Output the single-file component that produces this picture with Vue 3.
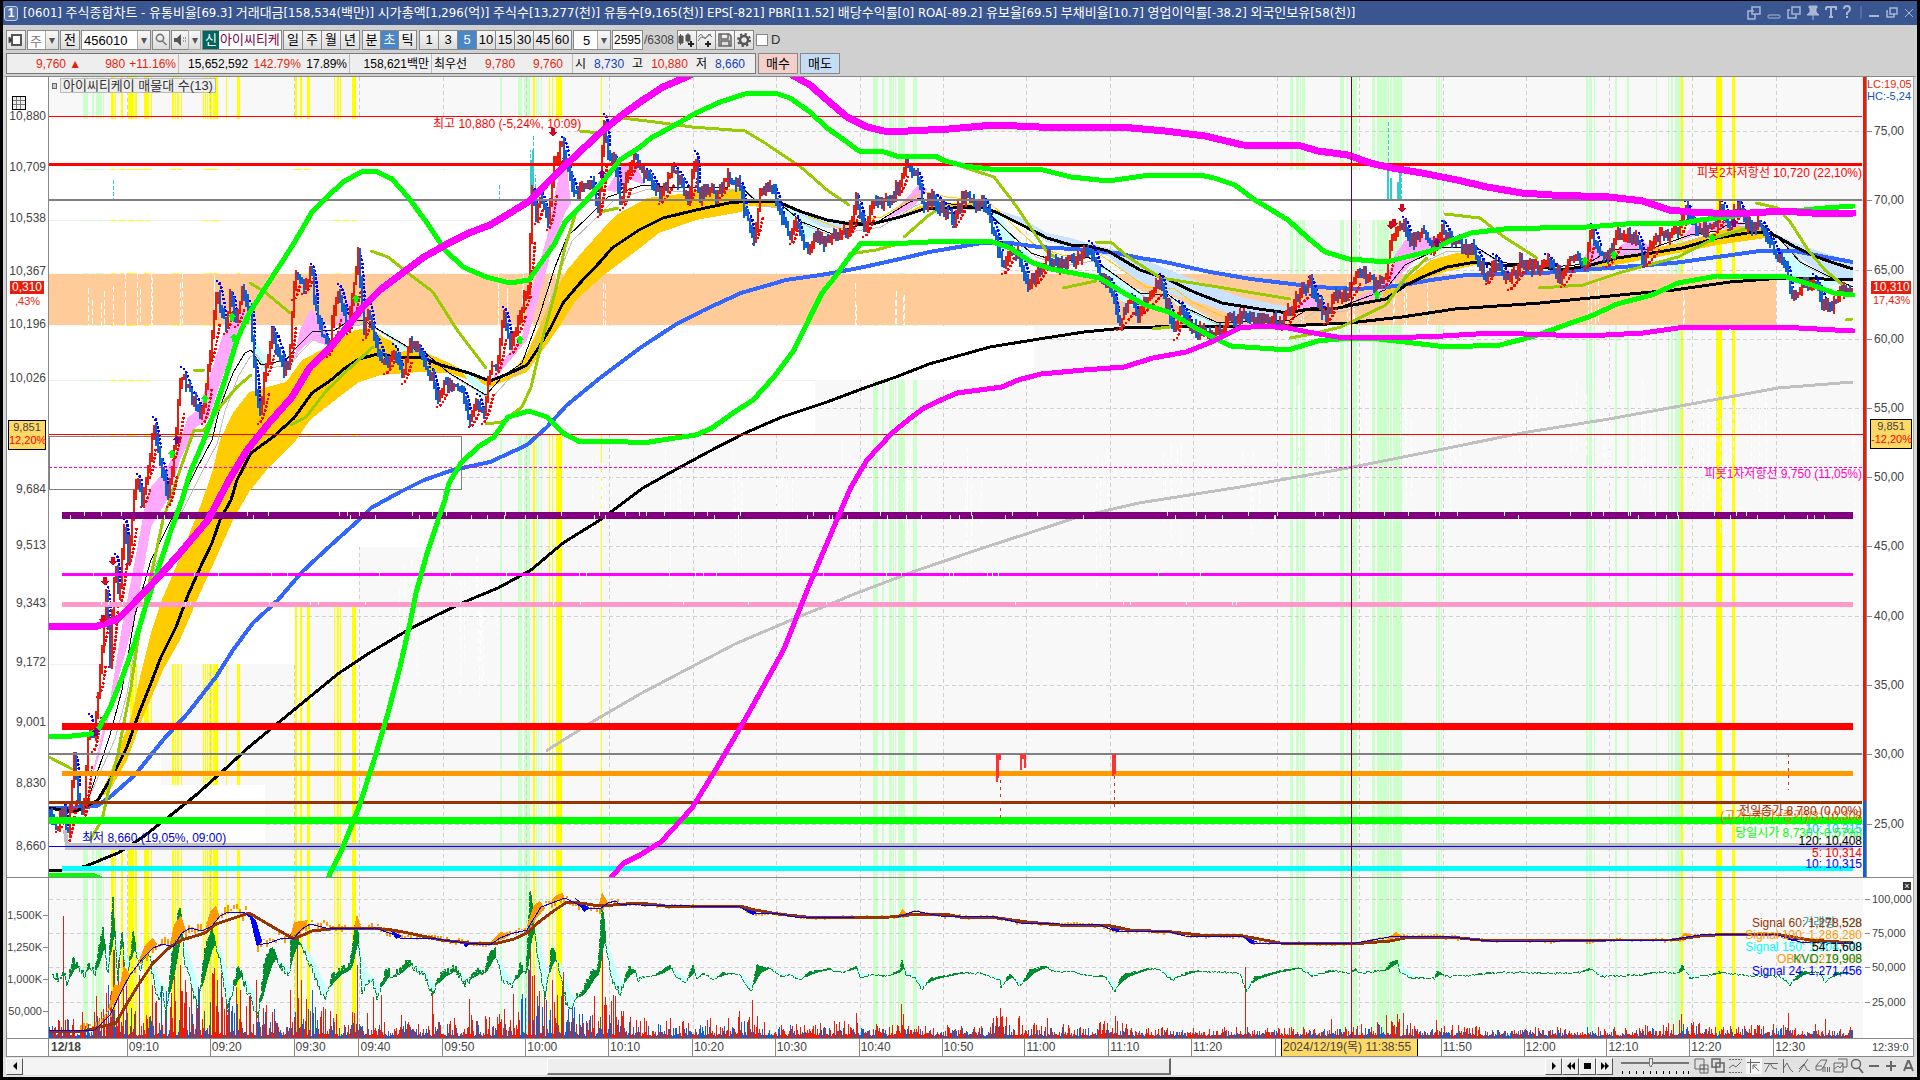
<script setup>
const rnd = (seed) => {
  let s = seed
  return () => {
    s = (s * 1103515245 + 12345) % 2147483648
    return s / 2147483648
  }
}
const pts = (str) => str.trim().split(/\s+/).map((p) => p.split(',').map(Number))
const at = (list, x) => {
  if (x <= list[0][0]) return list[0][1]
  for (let i = 1; i < list.length; i++) {
    if (x <= list[i][0]) {
      const [x0, y0] = list[i - 1]
      const [x1, y1] = list[i]
      return x1 === x0 ? y1 : y0 + ((y1 - y0) * (x - x0)) / (x1 - x0)
    }
  }
  return list[list.length - 1][1]
}

/* Signal bands: [x, width] */
const yellow = [[111, 3], [115, 1], [121, 2], [128, 6], [135, 2], [144, 5], [151, 1], [172, 2], [175, 1], [177, 2], [181, 1], [203, 1], [205, 1], [207, 1], [209, 3], [213, 5], [226, 1], [237, 3], [295, 2], [300, 2], [307, 3], [334, 1], [337, 2], [340, 1], [352, 4], [533, 2], [549, 1], [552, 1], [556, 6], [601, 1], [1681, 2], [1716, 6], [1732, 3]]
const green = [[83, 5], [92, 2], [96, 6], [103, 1], [500, 2], [518, 4], [524, 6], [536, 1], [538, 1], [541, 1], [873, 5], [882, 2], [889, 3], [893, 1], [895, 1], [898, 7], [913, 4], [1290, 3], [1296, 3], [1300, 1], [1302, 3], [1340, 4], [1347, 1], [1352, 5], [1372, 3], [1377, 12], [1390, 2], [1393, 8], [1401, 1], [1436, 1], [1438, 2], [1441, 1], [1586, 2], [1589, 3], [1594, 1], [1615, 2], [1627, 2], [1656, 1], [1668, 1], [1671, 2], [1675, 6]]
const gridX = [127, 210, 294, 359, 443, 526, 609, 693, 776, 860, 943, 1026, 1110, 1193, 1277, 1359, 1443, 1526, 1609, 1692, 1776]
const gridY = [131, 200, 270, 339, 408, 477, 546, 616, 685, 754, 824]
const gridY2 = [899, 933, 967, 1002]

/* Volume-by-price boxes: [top, bottom, right edge] */
const boxes = [[170, 220, 1421], [220, 273, 1000], [326, 380, 1034], [380, 435, 815], [489, 547, 443], [547, 605, 359], [605, 664, 295], [664, 724, 130], [724, 785, 161], [785, 847, 265], [119, 169, 563]]

const fills = [
  ['#ffcc00', '98,800 110,773 131,717 141,673 151,633 163,597 176,567 192,527 200,507 212,473 220,440 233,413 249,392 286,382 302,360 327,347 355,330 371,328 384,338 408,347 420,350 449,363 490,383 510,375 527,353 539,327 551,300 567,270 584,250 602,230 616,215 640,202 647,198 696,192 741,188 749,205 741,212 696,220 659,233 640,248 604,275 576,300 559,327 543,350 527,372 490,387 449,373 420,372 380,375 359,382 339,397 310,420 294,443 269,467 249,492 233,520 212,567 200,593 180,640 163,670 143,717 127,760 110,790'],
  ['#ffcc00', '749,200 778,201 778,208 749,206'],
  ['#ffcc00', '892,220 920,206 940,203 985,203 985,209 920,210'],
  ['#ffcc00', '1383,292 1409,277 1431,260 1457,253 1476,252 1480,264 1444,272 1413,283 1383,297'],
  ['#ffcc00', '1590,264 1630,252 1680,243 1717,232 1735,226 1766,226 1765,238 1717,245 1652,258 1590,270'],
  ['#c8e2ff', '778,201 802,211 827,218 851,222 876,221 851,229 827,228 802,220'],
  ['#c8e2ff', '998,210 1022,218 1047,233 1071,238 1088,243 1116,250 1150,262 1194,280 1240,297 1288,307 1288,320 1240,318 1210,306 1165,292 1130,277 1108,256 1047,242'],
  ['#c8e2ff', '1778,235 1800,245 1853,262 1853,283 1825,276 1795,254'],
  ['#ffaaff', '90,783 110,700 122,627 135,560 145,507 151,487 163,473 176,453 188,417 198,410 212,370 222,337 233,323 245,307 249,320 241,333 224,373 208,420 196,427 180,460 167,500 151,527 135,617 118,680 98,760'],
  ['#ffaaff', '294,360 300,330 310,310 320,315 331,345 325,345 312,340 300,350'],
  ['#ffaaff', '335,325 345,305 357,295 360,315 347,325'],
  ['#ffaaff', '490,383 502,362 522,337 531,293 547,237 555,193 565,150 571,203 565,213 551,253 539,297 527,340 502,370'],
  ['#ffaaff', '606,190 622,165 634,160 645,185 630,180 615,192'],
  ['#ffaaff', '885,219 905,200 920,183 927,190 915,205 895,216'],
  ['#ffaaff', '1290,313 1305,298 1318,298 1330,308'],
  ['#ffaaff', '1350,303 1385,283 1395,255 1405,240 1440,236 1455,235 1440,248 1420,255 1400,275 1380,297'],
  ['#ffaaff', '1580,264 1595,240 1602,250 1610,255 1630,238 1645,243 1655,250 1680,240 1695,223 1720,222 1755,222 1720,230 1690,237 1650,252 1600,262'],
  ['#ccffff', '461,370 486,405 490,390 470,373'],
  ['#ccffff', '251,330 262,372 270,362 258,345'],
  ['#ccffff', '378,320 400,352 412,350 392,335'],
  ['#ccffff', '780,203 800,235 820,240 832,235 810,220'],
  ['#ccffff', '985,208 995,225 1005,250 1020,262 1035,262 1015,240 1000,215'],
  ['#ccffff', '1095,262 1120,300 1142,312 1150,295 1125,283 1105,265'],
  ['#ccffff', '1165,292 1195,325 1220,328 1210,318 1185,303'],
  ['#ccffff', '1780,245 1795,285 1820,288 1840,284 1810,270']
]

const fastMa = pts('49,808 75,812 88,800 110,735 122,690 135,615 151,560 196,470 212,440 220,407 233,373 245,353 251,350 261,365 286,360 294,350 312,332 335,330 347,322 363,320 384,333 408,347 424,352 449,373 486,395 502,377 522,363 539,317 555,267 567,237 588,217 608,197 643,185 680,188 729,187 741,187 757,202 778,202 802,222 835,235 851,227 876,223 908,203 920,198 941,203 982,207 1006,230 1031,253 1059,262 1088,257 1108,270 1140,293 1169,295 1186,308 1218,323 1239,322 1290,320 1310,308 1340,307 1385,290 1405,265 1440,248 1476,247 1500,262 1540,268 1587,264 1610,250 1650,249 1690,235 1717,231 1730,223 1760,223 1778,237 1800,262 1830,277 1853,287')
const join = (l) => l.map((p) => p.join(',')).join(' ')
const slowMa = fastMa.map(([x, y], i) => [i > 2 && x < 1848 ? x + 5 : x, i > 2 ? y + 4 : y])
const goldMa = fastMa.filter((p) => p[0] > 778 && p[0] < 1290).map(([x, y]) => [x + 6, y - 6])

const curves = [
  ['#c0c0c0', 1, join(slowMa)],
  ['#ffcc00', 1, join(goldMa)],
  ['#000000', 1, join(fastMa)],
  ['#c0c0c0', 3, '546,751 592,722 640,694 735,644 796,618 857,593 918,570 980,549 1078,517 1139,503 1240,487 1348,468 1448,448 1522,433 1609,419 1691,404 1778,388 1853,382'],
  ['#000000', 3, '49,871 75,869 86,866 118,853 143,837 171,815 196,795 224,770 249,747 278,723 306,700 339,673 371,652 408,630 437,615 469,600 498,588 531,570 563,543 600,520 627,500 643,488 675,470 708,452 745,433 782,417 827,402 867,387 896,377 929,364 990,347 1039,339 1084,332 1124,328 1186,326 1284,326 1349,323 1402,317 1455,309 1540,303 1630,294 1674,290 1730,282 1769,279 1795,278 1853,280'],
  ['#3366ff', 4, '49,808 70,808 97,806 110,797 135,775 163,740 188,713 216,677 233,650 253,623 278,600 302,572 331,545 359,520 371,508 400,492 424,480 453,470 490,462 527,445 547,427 567,405 600,378 640,348 675,325 704,310 741,293 786,280 827,274 859,268 900,259 929,252 982,243 1010,243 1039,247 1088,250 1116,253 1140,258 1165,262 1210,272 1251,279 1316,287 1357,289 1398,286 1431,280 1467,275 1544,273 1609,268 1674,263 1717,257 1760,251 1795,251 1825,257 1853,262'],
  ['#000000', 3, '49,808 75,812 98,800 114,773 127,747 139,713 151,683 161,657 176,627 188,595 200,568 212,543 220,520 231,500 237,480 251,453 273,437 294,418 312,393 331,380 345,368 359,359 378,354 402,358 420,357 441,365 469,373 490,381 510,373 527,365 539,347 551,327 563,303 580,283 600,262 612,248 639,230 663,218 696,210 729,203 749,201 778,202 802,212 827,220 851,224 876,223 900,217 924,209 982,207 998,213 1022,225 1047,238 1071,245 1088,246 1108,251 1140,270 1165,278 1194,292 1222,303 1259,309 1288,313 1308,309 1333,309 1353,305 1386,299 1406,285 1427,275 1447,267 1476,262 1504,266 1522,264 1561,270 1587,266 1617,258 1652,253 1682,248 1717,238 1747,233 1765,232 1778,237 1795,247 1817,257 1834,263 1853,269']
]
const olive = ['49,757 72,769', '90,840 102,820 108,793 118,753 131,687 139,633 147,593 155,557 163,520 180,470 194,430 204,430 220,407 237,387 251,375', '194,370 204,370', '250,283 265,292 290,313', '291,425 306,417 327,390 351,367 373,347', '371,251 388,257 408,273 433,292 457,330 486,368', '486,424 502,422 522,407 531,387 543,337 555,293 565,247 576,212', '580,131 600,133', '600,212 618,208', '622,118 655,122 692,127 745,131 765,143 802,168 827,190 849,205', '849,254 876,250 902,243', '904,237 929,215 937,210', '957,165 994,177 1014,203 1031,228 1047,252 1063,262', '1063,288 1096,281', '1096,242 1112,243 1128,257 1161,278 1218,287 1290,299', '1153,329 1178,326', '1290,338 1312,334 1341,327 1386,305 1406,277 1427,258', '1445,214 1480,218 1504,237 1537,258', '1539,288 1583,285 1622,272 1678,257 1717,237 1752,227', '1756,203 1778,208 1791,223 1808,250 1825,270 1843,285', '1846,320 1852,319']
const bands = [
  ['#00ff00', 5, '49,736 72,736 90,734 98,730 110,708 122,678 135,642 145,608 157,573 171,530 182,500 190,473 204,440 216,407 227,373 237,340 247,317 265,288 282,262 294,243 312,212 327,197 343,182 361,172 375,171 392,179 408,197 427,223 445,250 463,267 486,277 510,283 529,280 543,260 555,243 565,222 584,203 604,180 620,160 640,147 651,138 675,125 696,113 720,102 745,94 775,93 790,98 810,112 827,128 847,142 859,151 884,152 900,157 935,156 945,161 965,166 990,169 1039,169 1071,177 1108,181 1150,175 1200,175 1214,178 1235,185 1255,200 1288,220 1308,238 1325,252 1349,259 1386,262 1406,257 1431,251 1447,242 1471,233 1504,229 1540,228 1587,227 1639,223 1678,224 1700,220 1734,216 1770,211 1804,210 1825,208 1853,206'],
  ['#00ff00', 5, '329,876 343,847 359,807 375,757 388,713 400,667 410,623 416,593 426,557 439,517 445,500 449,483 461,463 478,447 494,437 508,417 529,411 547,417 563,433 580,442 612,441 643,443 675,438 696,435 712,428 733,413 753,400 773,378 794,350 810,317 822,293 835,277 847,260 861,243 908,243 949,241 990,241 1010,248 1031,262 1051,269 1100,278 1124,293 1145,305 1169,312 1194,327 1214,338 1231,346 1288,350 1318,341 1349,338 1370,338 1405,342 1446,347 1500,345 1535,336 1565,325 1591,316 1617,304 1652,295 1678,283 1717,276 1786,277 1812,285 1834,293 1853,295'],
  ['#ff00ff', 5, '612,876 624,863 640,855 661,842 692,808 716,769 747,716 784,649 808,588 833,529 851,487 867,460 892,433 908,420 924,408 941,400 957,393 1002,387 1018,380 1041,374 1084,370 1124,367 1153,358 1186,352 1214,341 1239,328 1263,326 1288,328 1308,332 1337,337 1390,338 1443,336 1492,333 1587,336 1643,333 1678,328 1730,327 1799,328 1853,331'],
  ['#ff00ff', 7, '49,626 98,626 118,619 135,602 153,583 180,553 208,520 229,480 247,450 269,423 292,397 310,367 331,347 347,327 363,307 380,290 400,275 424,257 449,243 469,233 490,225 510,213 531,200 547,183 571,160 600,133 622,115 643,100 663,87 684,78 696,72 785,68 792,75 810,85 827,100 847,117 867,127 884,131 908,131 949,129 994,125 1039,127 1120,127 1165,131 1205,136 1243,145 1301,146 1318,151 1348,155 1370,163 1392,168 1422,173 1457,180 1487,187 1522,193 1552,195 1609,197 1643,201 1669,210 1691,212 1734,214 1782,211 1812,213 1853,213']
]

/* Horizontal levels: [y, x1, x2, thickness, colour] */
const levels = [
  [116, 49, 1862, 1, '#ff0000'], [163, 49, 1862, 3, '#ff0000'], [199, 49, 1862, 2, '#808080'], [434, 49, 1866, 1, '#ff0000'],
  [512, 62, 1853, 7, '#800080'], [573, 62, 1853, 3, '#ff00ff'], [602, 62, 1853, 5, '#ff99cc'], [723, 62, 1853, 7, '#ff0000'],
  [753, 49, 1862, 2, '#808080'], [771, 62, 1853, 5, '#ff9900'], [801, 49, 1862, 3, '#993300'], [817, 49, 1862, 7, '#00ff00'],
  [843, 65, 1853, 7, '#c0c0c0'], [846, 49, 1862, 1, '#0000ff'], [866, 62, 1853, 5, '#00ffff']
]

const price = pts('49,812 56,825 62,808 66,840 73,760 78,800 82,815 88,720 92,745 97,690 102,640 105,590 109,660 114,560 118,600 123,525 127,560 133,490 136,480 141,500 147,473 152,423 159,463 167,500 173,453 180,373 190,397 202,417 208,360 216,287 224,327 229,297 235,320 241,293 249,307 253,367 258,417 265,370 271,333 284,373 288,360 292,293 296,273 302,287 310,270 316,320 327,350 337,290 347,327 357,255 363,333 367,307 373,340 384,367 392,350 402,377 408,343 416,350 429,373 437,400 445,380 461,393 469,420 476,400 482,417 490,367 496,367 502,313 510,347 516,327 522,303 527,287 531,193 535,217 539,197 547,223 553,167 561,143 569,180 576,197 582,187 590,183 598,210 603,120 608,160 613,160 620,203 627,173 633,153 640,167 646,175 659,197 671,170 688,197 694,157 698,197 708,187 716,193 725,177 739,187 745,217 753,237 759,197 767,187 773,193 782,223 790,237 794,220 802,247 808,250 814,237 822,243 835,233 847,230 855,200 863,230 871,203 888,203 896,190 904,163 916,177 922,203 933,200 953,220 961,200 982,203 990,223 1002,267 1010,250 1018,257 1027,283 1035,277 1045,257 1055,267 1071,260 1088,247 1100,277 1108,283 1117,323 1131,300 1137,317 1141,307 1159,280 1165,303 1174,333 1178,307 1190,327 1202,333 1220,333 1227,320 1247,317 1282,323 1292,303 1308,283 1316,300 1324,317 1333,297 1349,293 1357,270 1373,283 1384,280 1390,240 1398,230 1402,223 1410,243 1422,233 1431,247 1441,227 1451,243 1471,250 1486,277 1492,260 1508,283 1520,260 1533,270 1544,260 1561,280 1570,257 1585,263 1590,230 1600,257 1606,260 1617,235 1635,237 1643,260 1656,237 1678,230 1684,207 1693,227 1711,230 1721,207 1728,223 1737,207 1745,223 1760,227 1769,243 1778,260 1784,267 1791,297 1799,287 1812,280 1825,310 1834,300 1847,287 1852,290')
let red = ''
let blue = ''
{
  const r = rnd(7)
  let prev = 812
  for (let x = 49; x < 1853; x += 2) {
    const y = at(price, x) + (r() - 0.5) * 10
    const top = Math.round(Math.min(prev, y) - 1 - r() * 6)
    const bot = Math.round(Math.max(prev, y) + 1 + r() * 6)
    const seg = `M${x + 0.5} ${top}V${bot}`
    if (y < prev) red += seg
    else blue += seg
    prev = y
  }
}
let sarDown = ''
let sarUp = ''
{
  for (let i = 1; i < price.length; i++) {
    const [x0, y0] = price[i - 1]
    const [x1, y1] = price[i]
    const d = y1 - y0
    if (d > 15) sarDown += `M${x0 + 1} ${y0 - 6}Q${x0 + 6} ${y0 - 6} ${x1 + 2} ${y0 + d * 0.7}`
    if (d < -15) sarUp += `M${x0} ${y0 + 7}Q${x0 + 5} ${y0 + 7} ${x1 + 4} ${y0 + d * 0.5}`
  }
}
let dashes = ''
{
  const r = rnd(31)
  for (const c of [88, 100, 112, 125, 137, 150, 178, 212, 495, 504, 522, 531, 545, 553, 601, 855, 893, 900, 1300, 1345, 1352, 1393, 1402, 1425, 1587, 1594, 1680])
    for (let i = 0; i < 2; i++) dashes += `M${c + Math.floor(r() * 5) + 0.5} ${273 + Math.floor(r() * 35)}V325`
  const groups = [395, 460, 475, 590, 660, 720, 770, 835, 860, 900, 960, 1090, 1160, 1240, 1290, 1310, 1345, 1400, 1440, 1515, 1570, 1590, 1630, 1680, 1700, 1720, 1745, 1850]
  for (const c of groups)
    for (let i = 0; i < 5; i++) {
      const y = (c < 500 ? 550 : 440) + Math.floor(r() * 50) - (c > 1250 ? 60 : 0)
      dashes += `M${c + Math.floor(r() * 24) + 0.5} ${y}v${30 + Math.floor(r() * 90)}`
    }
}
let nicks = ''
{
  const r = rnd(5)
  for (let i = 0; i < 95; i++) nicks += `M${70 + Math.floor(r() * 1780)}.5 ${r() > 0.5 ? 512 : 515}v4`
  for (let i = 0; i < 50; i++) nicks += `M${70 + Math.floor(r() * 1200)}.5 ${r() > 0.5 ? 573 : 602}v3`
}
const downs = [[553, 132], [113, 561], [105, 581], [103, 619], [1402, 208], [1391, 225], [1394, 223]]
const ups = [[232, 317], [234, 338], [247, 320], [205, 399], [172, 454], [356, 299], [520, 340], [1377, 295], [1585, 261], [1614, 255], [1712, 238]]
const marks = [[177, 440], [96, 732], [602, 174], [1437, 243], [1734, 223]]

/* Indicator pane */
const brown = '49,1031 80,1032 100,1027 116,1023 125,1007 137,987 153,963 170,947 182,940 205,933 216,924 237,917 249,913 261,920 278,930 294,939 312,931 339,928 371,928 392,930 408,933 441,940 469,943 494,944 514,939 527,933 539,922 555,910 567,902 580,903 600,906 640,903 665,906 740,906 755,910 778,914 815,918 890,917 918,914 945,914 960,917 990,917 1027,922 1060,925 1106,925 1130,930 1172,932 1200,935 1243,936 1280,943 1351,944 1390,941 1410,937 1450,937 1480,940 1530,941 1607,940 1672,940 1700,936 1730,934 1775,934 1810,940 1853,943'
const signal = '49,1031 95,1030 110,1015 122,990 130,975 143,958 153,948 163,944 173,947 182,933 190,928 202,931 212,926 220,916 228,912 245,913 251,918 257,945 269,943 280,939 294,938 302,929 310,924 330,929 375,928 392,934 400,938 430,938 465,943 490,945 500,938 510,934 527,930 533,920 541,907 552,903 565,898 575,903 584,908 600,909 608,903 615,901 620,904 640,905 740,907 752,914 775,913 800,918 855,917 898,917 915,911 940,916 995,917 1020,923 1100,925 1115,931 1170,932 1185,936 1244,937 1250,943 1350,944 1395,936 1440,936 1490,941 1560,941 1670,940 1700,935 1775,934 1800,942 1853,944'
const obvFills = ['95,1030 108,1010 114,985 120,985 124,965 130,975 122,992', '137,965 145,945 153,938 157,944 143,960', '170,945 174,925 181,915 186,930 178,938', '205,930 210,912 216,905 220,917 212,927', '290,938 294,922 308,920 304,930', '354,928 357,914 361,928', '490,943 500,932 512,934 504,939', '518,932 526,928 534,905 540,901 545,908 531,925', '549,904 556,895 563,893 565,899', '598,908 602,892 608,903', '898,917 902,909 908,914', '1385,941 1396,932 1402,936', '1680,937 1684,933 1694,935']
const obvDrops = ['249,914 257,947 262,941 256,920', '390,930 396,939 402,936', '462,942 466,948 470,943', '575,898 584,912 590,908', '740,907 753,915 757,912', '995,918 1022,924 1000,917', '1106,925 1117,932 1120,929', '1244,936 1250,943 1258,942', '1778,935 1792,941 1800,940']
let obvNoise = ''
{
  const r = rnd(77)
  const s = pts(signal)
  for (let x = 80; x < 1850; x += 3) {
    const amp = x < 330 ? 8 : x < 620 ? 5 : 2
    const y = Math.round(at(s, x))
    obvNoise += `M${x}.5 ${y - Math.round(r() * amp)}v${1 + Math.round(r() * amp)}`
  }
}
const kvo = pts('52,973 60,980 65,972 67,985 73,960 85,975 88,965 95,972 100,940 103,930 108,975 113,900 118,985 122,930 126,985 133,935 140,970 147,945 152,970 158,1000 162,990 166,1018 172,955 180,905 185,965 198,1008 205,950 212,930 220,960 228,1010 238,965 245,985 253,1005 258,1015 265,960 272,945 280,965 290,975 291,930 297,935 310,965 325,1000 333,975 340,970 350,965 357,915 362,990 372,980 378,1000 385,970 395,975 408,960 425,978 433,995 440,975 455,968 465,985 475,972 485,972 488,955 495,950 502,980 512,985 520,965 526,975 530,890 537,950 545,1000 552,945 558,965 568,1010 575,1000 585,985 598,965 602,905 608,960 613,980 620,992 630,965 638,978 655,975 670,965 675,975 686,983 693,965 697,979 703,973 714,980 723,973 740,975 748,988 752,990 757,965 770,968 780,976 790,975 800,980 810,972 830,969 843,973 856,966 860,977 875,974 885,976 900,970 902,960 906,975 915,978 922,990 930,978 960,973 980,973 1000,980 1001,988 1010,973 1020,987 1030,970 1045,966 1052,971 1075,972 1090,976 1105,976 1115,992 1122,975 1150,968 1160,970 1172,980 1190,971 1240,973 1246,992 1255,977 1280,971 1300,968 1312,976 1332,970 1350,973 1355,968 1360,973 1385,970 1390,963 1397,960 1400,972 1410,978 1435,978 1437,970 1445,976 1470,975 1500,972 1560,973 1580,972 1590,968 1600,976 1640,975 1655,972 1678,973 1682,965 1690,978 1710,975 1720,972 1740,975 1780,976 1790,985 1800,972 1820,972 1825,983 1835,973 1853,973')
let kvoUp = ''
let kvoDown = ''
let kvoLine = ''
{
  const r = rnd(19)
  let ema = 973
  for (let x = 52; x < 1853; x++) {
    const noise = x < 640 ? 9 : 2
    const y = at(kvo, x) + (r() - 0.5) * noise
    ema += (y - ema) * 0.13
    if (y < ema - 0.5) kvoUp += `M${x}.5 ${Math.round(y)}V${Math.round(ema)}`
    else kvoDown += `M${x}.5 ${Math.round(ema)}V${Math.round(y)}`
    kvoLine += `${x === 52 ? 'M' : 'L'}${x} ${Math.round(y)}`
  }
}
let volRed = ''
let volBlue = ''
{
  const r = rnd(101)
  const env = pts('49,14 80,26 100,48 130,62 180,66 212,70 250,46 290,34 308,50 330,24 400,22 500,22 522,60 562,66 580,34 605,50 630,22 700,16 735,20 760,22 800,12 860,16 880,10 980,10 995,20 1020,16 1040,10 1115,16 1140,8 1270,8 1350,10 1380,18 1402,28 1415,10 1440,12 1500,8 1580,9 1590,14 1620,7 1675,14 1690,18 1710,9 1780,12 1800,6 1853,9')
  for (let x = 49; x < 1853; x++) {
    const e = at(env, x)
    const h = 3 + e * Math.pow(r(), 1.9)
    if (r() > 0.42) volRed += `M${x}.5 1038V${Math.round(1038 - h)}`
    else volBlue += `M${x}.5 1038V${Math.round(1038 - h * 0.75)}`
  }
  for (const [x, y] of [[63, 916], [96, 996], [113, 950], [118, 960], [123, 960], [152, 985], [180, 965], [212, 973], [214, 968], [240, 990], [256, 980], [290, 990], [297, 945], [301, 980], [357, 965], [373, 997], [381, 995], [432, 992], [469, 999], [529, 970], [530, 891], [534, 975], [552, 980], [602, 950], [615, 996], [739, 1011], [752, 1000], [856, 1013], [901, 1004], [903, 1014], [1000, 1008], [1018, 1018], [1019, 1016], [1047, 1018], [1115, 1016], [1245, 967], [1331, 1019], [1403, 1013], [1436, 1020], [1679, 1020], [1681, 1014], [1773, 1024], [1788, 1013], [1815, 1024], [1825, 1019]])
    volRed += `M${x}.5 1038V${y}`
  for (const [x, y] of [[108, 985], [114, 950], [256, 1015], [312, 990], [528, 969], [602, 990], [903, 1021], [1683, 1024]]) volBlue += `M${x}.5 1038V${y}`
}

/* Labels use the same coordinate space as the drawings */
const top1 = (y) => ({ top: ((y - 77) / 800) * 100 + '%' })
const top2 = (y) => ({ top: ((y - 878) / 160) * 100 + '%' })
const place1 = (x, y) => ({ left: ((x - 49) / 1814) * 100 + '%', ...top1(y) })
const leftLabels = [['10,880', 116], ['10,709', 167], ['10,538', 218], ['10,367', 271], ['10,196', 324], ['10,026', 378], ['9,684', 489], ['9,513', 545], ['9,343', 603], ['9,172', 662], ['9,001', 722], ['8,830', 783], ['8,660', 846]]
const rightLabels = gridY.map((y, i) => [`${75 - i * 5},00`, y])
const volLabels = [['1,500K', 915], ['1,250K', 947], ['1,000K', 979], ['50,000', 1011]]
const subLabels = [['100,000', 899], ['75,000', 933], ['50,000', 967], ['25,000', 1002]]
const notes = [
  ['(고가+저가+종가)/3: 10,308', 816, '#ff6600'], ['전일종가 8,780 (0,00%)', 811, '#993300'], ['10: 10,315', 829, '#00ccff'],
  ['당일시가 8,730 (-0,57%)', 833, '#00ff00'], ['120: 10,408', 841, '#000000'], ['5: 10,314', 853, '#ff0000'], ['10: 10,315', 864, '#0000ff'],
  ['피봇2차저항선 10,720 (22,10%)', 173, '#ff0000'], ['피봇1차저항선 9,750 (11,05%)', 474, '#ff00cc']
]
const subNotes = [
  ['거래량: 528', 923, '#339999'], ['Signal 60: 1,278,528', 923, '#993300'], ['Signal 100: 1,286,280', 935, '#ff9900'], ['Signal 150: 1,304,620', 947, '#00ffff'], ['54: 1,608', 947, '#000000'],
  ['OBV: 1,270,985', 959, '#ff9900'], ['KVO: 19,908', 959, '#008e2f'], ['Signal 24: 1,271,456', 971, '#0000ff']
]
const times = [['09:10', 127], ['09:20', 210], ['09:30', 294], ['09:40', 359], ['09:50', 443], ['10:00', 526], ['10:10', 609], ['10:20', 693], ['10:30', 776], ['10:40', 860], ['10:50', 943], ['11:00', 1026], ['11:10', 1110], ['11:20', 1193], ['', 1277], ['11:50', 1443], ['12:00', 1526], ['12:10', 1609], ['12:20', 1692], ['12:30', 1776]]
const timeLeft = (x) => ({ left: ((x - 49) / 1817) * 100 + '%' })
const periods = ['일', '주', '월', '년']
const units = ['분', '초', '틱']
const steps = ['1', '3', '5', '10', '15', '30', '45', '60']
</script>

<template>
  <div class="app">
    <header class="title">
      <span class="badge">1</span>
      <h1>[0601] 주식종합차트 - 유통비율[69.3] 거래대금[158,534(백만)] 시가총액[1,296(억)] 주식수[13,277(천)] 유통수[9,165(천)] EPS[-821] PBR[11.52] 배당수익률[0] ROA[-89.2] 유보율[69.5] 부채비율[10.7] 영업이익률[-38.2] 외국인보유[58(천)]</h1>
      <svg class="winicons" width="170" height="18" viewBox="0 0 170 18" fill="none" stroke="#a9b6d6">
        <path d="M5 3h8v7H5zM7 7H1v8h7v-5" stroke-width="1.5" />
        <rect x="21" y="11" width="12" height="3" rx="1" />
        <path d="M45 3h8v7h-8zM43 6h-2v8h8v-3" stroke-width="1.5" />
        <path d="M62 2h8v2h-1v4l3 3H60l3-3V4h-1zM66 11v5" fill="#a9b6d6" />
        <path d="M79 3h10v3M79 3v3M84 3v10M82 13h4" stroke-width="2" />
        <path d="M97 5q0-3 3-3t3 3q0 2-3 4v2M100 12v2" stroke-width="2" />
        <path d="M114 2v13" stroke="#6f83b5" />
        <path d="M122 12h10" stroke-width="2" />
        <path d="M143 4h7v6h-7zM141 7h-1v6h7v-3" stroke-width="1.5" />
        <path d="M158 5l8 8M166 5l-8 8" />
      </svg>
    </header>

    <nav class="toolbar" aria-label="차트 도구">
      <button class="b w20" aria-label="창"><svg width="16" height="14" viewBox="0 0 16 14" fill="none" stroke="#555"><path d="M4 2h9v10H4z" fill="#fff" stroke-width="2" /><path d="M1 4l4 3-4 3z" fill="#333" /></svg></button>
      <div class="drop w32"><input class="gray" value="주" aria-label="구분"><button class="arr" aria-label="구분 열기">▾</button></div>
      <button class="b w20">전</button>
      <div class="drop w70"><input value="456010" aria-label="종목코드"><button class="arr" aria-label="종목 열기">▾</button></div>
      <button class="b w18" aria-label="검색"><svg width="14" height="14" viewBox="0 0 14 14" fill="none" stroke="#777" stroke-width="1.6"><circle cx="6" cy="5" r="3.6" /><path d="M8.5 8l4 4" /></svg></button>
      <div class="group"><button class="b w18" aria-label="소리"><svg width="16" height="14" viewBox="0 0 16 14"><path d="M2 5h3l4-4v12l-4-4H2z" fill="#555" /><path d="M11 5h1M13 5h1M11 8h1M13 8h1" stroke="#555" /></svg></button><button class="arr" aria-label="소리 열기">▾</button></div>
      <div class="name"><b>신</b><span>아이씨티케</span></div>
      <div class="group"><button v-for="p in periods" :key="p" class="b w20">{{ p }}</button></div>
      <div class="group units"><button v-for="u in units" :key="u" class="b w19" :class="{ on: u === '초' }">{{ u }}</button></div>
      <div class="group"><button v-for="s in steps" :key="s" class="b w20" :class="{ on: s === '5' }">{{ s }}</button></div>
      <div class="drop w38"><input class="mid" value="5" aria-label="주기"><button class="arr" aria-label="주기 열기">▾</button></div>
      <div class="count"><input value="2595" aria-label="개수"><span>/6308</span></div>
      <div class="group">
        <button class="b w20" aria-label="봉 추가"><svg width="18" height="16" viewBox="0 0 18 16"><path d="M1 4h4v7H1zM2.5 2v11M8 3h4v6H8zM10 1v10" fill="#555" stroke="#555" /><path d="M10 12h6M13 9v6" stroke="#222" stroke-width="2" /></svg></button>
        <button class="b w20" aria-label="지표 추가"><svg width="18" height="16" viewBox="0 0 18 16" fill="none" stroke="#777"><path d="M1 5l3-3 4 5 4-5 3 3M1 9l3-4 4 1 6-4" /><path d="M8 12h6M11 9v6" stroke="#222" stroke-width="2" /></svg></button>
        <button class="b w20" aria-label="저장"><svg width="16" height="16" viewBox="0 0 16 16" fill="#ddd" stroke="#666" stroke-width="1.5"><path d="M2 2h10l2 2v10H2zM4 2v5h7V2M4 14V9h8v5" /></svg></button>
        <button class="b w20" aria-label="설정"><svg width="16" height="16" viewBox="0 0 16 16" fill="none" stroke="#555"><circle cx="8" cy="8" r="4" stroke-width="2.5" /><circle cx="8" cy="8" r="6" stroke-width="2" stroke-dasharray="2.3 2.4" /></svg></button>
      </div>
      <label class="check"><input type="checkbox">D</label>
    </nav>

    <section class="info">
      <div class="quote">
        <div class="cell c1"><span class="r n1">9,760 ▲</span><span class="r">980</span><span class="r">+11.16%</span></div>
        <div class="cell c2"><span>15,652,592</span><span class="r">142.79%</span><span>17.89%</span></div>
        <div class="cell c3"><span>158,621백만</span></div>
        <div class="cell c4"><span>최우선</span><span class="r">9,780</span><span class="r">9,760</span></div>
        <div class="cell c5"><span>시</span><span class="u">8,730</span><span>고</span><span class="r">10,880</span><span>저</span><span class="u">8,660</span></div>
      </div>
      <button class="trade buy">매수</button>
      <button class="trade sell">매도</button>
    </section>

    <main class="chart">
      <div class="axis left">
        <span class="gridicon"></span>
        <span v-for="l in leftLabels" :key="l[0]" class="lab" :style="top1(l[1])">{{ l[0] }}</span>
        <span class="now" :style="top1(288)">0,310</span><span class="pct" :style="top1(301)">,43%</span>
        <span class="cursor" :style="top1(435)">9,851<br><i>12,20%</i></span>
      </div>
      <div class="plot">
        <svg viewBox="49 77 1814 800" preserveAspectRatio="none" shape-rendering="crispEdges">
          <rect x="49" y="77" width="1814" height="800" fill="#f8f8f8" />
          <rect v-for="b in green" :key="'g' + b[0]" :x="b[0]" y="77" :width="b[1]" height="800" fill="#ccffcc" />
          <rect v-for="b in yellow" :key="'y' + b[0]" :x="b[0]" y="77" :width="b[1]" height="800" fill="#ffff00" />
          <g stroke="#d0d0d0" stroke-dasharray="4 3">
            <line v-for="x in gridX" :key="x" :x1="x + 0.5" :x2="x + 0.5" y1="77" y2="877" />
            <line v-for="y in gridY" :key="y" x1="49" x2="1863" :y1="y + 0.5" :y2="y + 0.5" />
          </g>
          <rect v-for="b in boxes" :key="b[0]" x="49" :y="b[0]" :width="b[2] - 49" :height="b[1] - b[0]" fill="#fff" />
          <path d="M49 220.500H900M49 380.500H815M49 664.500H130" stroke="#f0f0f0" />
          <path d="M83 169.500h22M83 220.500h22M83 380.500h22M83 489.500h22" stroke="#ccffcc" />
          <path d="M110 169.500h40M170 169.500h12M203 169.500h16M110 220.500h40M203 220.500h16M110 380.500h40M203 380.500h16M295 169.500h16M334 220.500h22M334 380.500h22" stroke="#ffff00" stroke-dasharray="6 3" />
          <rect x="49" y="274" width="1727" height="51" fill="#ffcc99" />
          <rect x="49" y="436.500" width="412" height="53" fill="#fff" stroke="#808080" />
          <path :d="dashes" stroke="#fff" stroke-dasharray="6 3" />
          <polygon v-for="(f, i) in fills" :key="i" :points="f[1]" :fill="f[0]" />
          <polyline v-for="(c, i) in curves" :key="'c' + i" :points="c[2]" fill="none" :stroke="c[0]" :stroke-width="c[1]" />
          <polyline v-for="(o, i) in olive" :key="'o' + i" :points="o" fill="none" stroke="#99cc00" stroke-width="3" stroke-linecap="round" />
          <path d="M530.500 200V150M532 200V160M533.500 200V135M535 200V175M113.500 180v20M499.500 185v15M1388.500 122v48M1398.500 182v18M1401.500 172v28" stroke="#33cccc" stroke-dasharray="4 2" />
          <path d="M531 200V160M533 200V150M1387.500 170v30M1390.500 178v22M1397.500 182v18M1399.500 172v28" stroke="#33cccc" stroke-width="2" />
          <path :d="sarUp" fill="none" stroke="#ff0000" stroke-width="3" stroke-linecap="round" stroke-dasharray="0 4" />
          <path :d="sarDown" fill="none" stroke="#0000ff" stroke-width="3" stroke-linecap="round" stroke-dasharray="0 4" />
          <path :d="blue" stroke="#1060d0" stroke-width="2" />
          <path :d="red" stroke="#e81e0c" stroke-width="2" />
          <polyline points="65,830 67,846 80,846" fill="none" stroke="#c0c0c0" stroke-width="4" />
          <rect v-for="l in levels" :key="l[0]" :x="l[1]" :y="l[0]" :width="l[2] - l[1]" :height="l[3]" :fill="l[4]" />
          <path d="M49 467.500H1863" stroke="#ff00cc" stroke-dasharray="3 2" />
          <path :d="nicks" stroke="#fff" />
          <polyline v-for="(b, i) in bands" :key="'b' + i" :points="b[2]" fill="none" :stroke="b[0]" :stroke-width="b[1]" stroke-linejoin="round" stroke-linecap="round" />
          <path d="M49 873h45l9 4H49z" fill="#00ff00" />
          <path d="M996.500 754v28M998 754v24M1000 754v6M1020.500 754v16M1023 754v5M1025 754v14M1113 754v22M1114.500 754v20" stroke="#ff3333" stroke-width="2" />
          <path d="M1000.500 780v38M1114.500 776v34M1788.500 754v36" stroke="#cc3333" stroke-dasharray="3 4" />
          <path v-for="(a, i) in downs" :key="'d' + i" :d="`M${a[0] - 2} ${a[1] - 4}h4v4h2l-4 5l-4 -5h2z`" fill="#dd0022" />
          <path v-for="(a, i) in ups" :key="'u' + i" :d="`M${a[0]} ${a[1] - 5}l4 5h-2v4h-4v-4h-2z`" fill="#00ff00" />
          <path v-for="(a, i) in marks" :key="'m' + i" :d="`M${a[0]} ${a[1] - 5}l4 5h-2v4h-4v-4h-2z`" fill="#800080" />
          <path d="M1351.500 77V877" stroke="#770022" />
        </svg>
        <span class="legend"><i></i><em>아이씨티케이 매물대 수(13)</em></span>
        <span class="note hi" :style="place1(433, 124)">최고 10,880 (-5,24%, 10:09)</span>
        <span class="note lo" :style="place1(82, 838)">최저 8,660 (19,05%, 09:00)</span>
        <span v-for="(n, i) in notes" :key="i" class="note end" :style="{ ...top1(n[1]), color: n[2] }">{{ n[0] }}</span>
      </div>
      <div class="axis right">
        <span class="rail"></span>
        <span class="lc">LC:19,05<br><i>HC:-5,24</i></span>
        <span v-for="l in rightLabels" :key="l[0]" class="lab" :style="top1(l[1])">{{ l[0] }}</span>
        <span class="now" :style="top1(288)">10,310</span><span class="pct" :style="top1(300)">17,43%</span>
        <span class="cursor" :style="top1(434)">9,851<br><i>-12,20%</i></span>
      </div>

      <div class="axis left sub">
        <span v-for="l in volLabels" :key="l[0]" class="lab" :style="top2(l[1])">{{ l[0] }}</span>
      </div>
      <div class="plot sub">
        <svg viewBox="49 878 1814 160" preserveAspectRatio="none" shape-rendering="crispEdges">
          <rect x="49" y="878" width="1814" height="160" fill="#f8f8f8" />
          <rect v-for="b in green" :key="'g' + b[0]" :x="b[0]" y="878" :width="b[1]" height="160" fill="#ccffcc" />
          <rect v-for="b in yellow" :key="'y' + b[0]" :x="b[0]" y="878" :width="b[1]" height="160" fill="#ffff00" />
          <g stroke="#d0d0d0" stroke-dasharray="4 3">
            <line v-for="x in gridX" :key="x" :x1="x + 0.5" :x2="x + 0.5" y1="878" y2="1038" />
            <line v-for="y in gridY2" :key="y" x1="49" x2="1863" :y1="y + 0.5" :y2="y + 0.5" />
          </g>
          <path :d="kvoDown" stroke="#ccffff" />
          <path :d="volBlue" stroke="#1060d0" />
          <path :d="volRed" stroke="#e81e0c" />
          <path :d="kvoLine" fill="none" stroke="#008e2f" stroke-dasharray="5 1" />
          <path :d="kvoUp" stroke="#008e2f" />
          <path :d="obvNoise" stroke="#ff9900" stroke-width="2" />
          <polygon v-for="(f, i) in obvFills" :key="i" :points="f" fill="#ff9900" />
          <polygon v-for="(f, i) in obvDrops" :key="'d' + i" :points="f" fill="#0000ff" />
          <polyline :points="brown" fill="none" stroke="#993300" stroke-width="3" />
          <polyline :points="signal" fill="none" stroke="#0000ff" />
          <path d="M1351.500 878V1038" stroke="#cc0033" />
        </svg>
        <span v-for="(n, i) in subNotes" :key="i" class="note end" :style="{ ...top2(n[1]), color: n[2] }">{{ n[0] }}</span>
      </div>
      <div class="axis right sub">
        <button class="x" aria-label="닫기">×</button>
        <span v-for="l in subLabels" :key="l[0]" class="lab" :style="top2(l[1])">{{ l[0] }}</span>
      </div>

      <div class="corner"></div>
      <div class="timeline">
        <b class="day">12/18</b>
        <span v-for="t in times" :key="t[1]" class="tick" :style="timeLeft(t[1])">{{ t[0] }}</span>
        <span class="date" :style="timeLeft(1283)">2024/12/19(목) 11:38:55</span>
      </div>
      <div class="corner end">12:39:0</div>
    </main>

    <footer class="bottom">
      <button class="s" aria-label="왼쪽"><svg width="8" height="10"><path d="M6 1v8L2 5z" /></svg></button>
      <div class="track"><div class="thumb"></div></div>
      <button class="s" aria-label="재생"><svg width="8" height="10"><path d="M2 1l4 4-4 4z" /></svg></button>
      <button class="s" aria-label="뒤로"><svg width="10" height="10"><path d="M5 1v8L1 5zM9 1v8L5 5z" /></svg></button>
      <button class="s" aria-label="정지"><svg width="8" height="8"><path d="M0 1h7v6H0z" /></svg></button>
      <button class="s" aria-label="앞으로"><svg width="10" height="10"><path d="M1 1v8l4-4zM5 1v8l4-4z" /></svg></button>
      <svg class="slider" width="76" height="18" viewBox="0 0 76 18" shape-rendering="crispEdges"><path d="M4 5.500h68" stroke="#777" stroke-width="2" /><path d="M5.500 14v3M12.500 14v3M19.500 14v3M26.500 14v3M33.500 14v3M39.500 14v3M46.500 14v3M52.500 14v3M59.500 14v3M66.500 14v3M71.500 14v3" stroke="#000" /><path d="M32 1h3v7l-1 2-2-2z" fill="#eee" stroke="#777" /></svg>
      <svg class="tools" width="222" height="18" viewBox="0 0 222 18" fill="none" stroke="#666">
        <rect x="53" y="1" width="16" height="16" fill="#f5f5f5" stroke="none" />
        <path d="M2 2h9v10H2zM7 8h8v8H7zM11 8v8M7 12h8" fill="#e2e2e2" />
        <path d="M19 2h8v8h-8zM23 6h8v9h-8z" fill="#e2e2e2" stroke-width="1.5" />
        <path d="M36 2.500h13M36 15.500h13" stroke-dasharray="2 1" /><path d="M36 11l4-3 3 2 5-5" />
        <path d="M54 5.500h13M57.500 2v14M66 14l-6-6M60 12V8h4" />
        <path d="M71 6.500h14M72 15l5-9 3 5 4 1" />
        <path d="M90.500 2v14M90 12l4-6 3 6 3 3" />
        <path d="M106 15l9-13M106 12l5-5 3 6 3 1" />
        <path d="M123 9l5-6h6l-3 6-3 4h-5zM123 9h6" fill="#e2e2e2" /><path d="M130 15v-5h2v5M134.500 10v5M136.500 10v5" />
        <path d="M141 6h9v9h-9zM145 2h9v8h-4M141 12l4-3 2 2 3-4" />
        <circle cx="163" cy="7" r="4.5" stroke-width="1.5" /><path d="M166 11l4 5" stroke-width="2" />
        <path d="M176 9h10M193 9h10M198 4v10" stroke-width="2" />
        <path d="M211 14l4-10h1l4 10M212 11h7" stroke-width="2" />
      </svg>
    </footer>
  </div>
</template>

<style>
html, body { background: #000; }
</style>

<style scoped>
* { box-sizing: border-box; }
.app { display: flex; flex-direction: column; height: 100vh; min-height: 600px; padding: 1px 3px 3px; background: #000; font: 12px/14px "Liberation Sans", "Noto Sans CJK KR", sans-serif; color: #000; overflow: hidden; }
button, input { font: inherit; color: inherit; margin: 0; padding: 0; border-radius: 0; }
.title { display: flex; align-items: center; height: 24px; flex: none; background: #3a5690; color: #fff; padding-left: 1px; }
.badge { width: 14px; height: 15px; border: 1px solid #c6d0e8; border-radius: 3px; text-align: center; line-height: 13px; font-weight: bold; background: #5b75ad; margin-right: 5px; }
h1 { flex: 1; margin: 0; font: 13px/18px "DejaVu Sans Condensed", "DejaVu Sans", "Noto Sans CJK KR", sans-serif; white-space: nowrap; overflow: hidden; }
.winicons { flex: none; }
.toolbar { display: flex; align-items: center; height: 28px; flex: none; background: #d0d0d0; padding: 2px 3px 0; gap: 1px; font-size: 13px; }
.b, .arr { height: 20px; border: 1px solid #888; background: linear-gradient(#f8f8f8, #dcdcdc); display: flex; align-items: center; justify-content: center; flex: none; }
.group { display: flex; }
.group .b + .b, .group .b + .arr { margin-left: -1px; }
.units { margin: 0 1px; }
.w18 { width: 18px; } .w19 { width: 19px; } .w20 { width: 20px; } .w32 { width: 32px; } .w38 { width: 38px; } .w70 { width: 70px; }
.b.on { background: #4a86c8; color: #fff; }
.arr { width: 13px; border-color: #aaa; font-size: 12px; color: #555; }
.drop { display: flex; height: 20px; border: 1px solid #888; background: #fff; flex: none; align-items: center; }
.drop input { flex: 1; min-width: 0; width: 0; border: 0; padding-left: 2px; height: 18px; background: #fff; }
.drop .arr { height: 18px; border-width: 0 0 0 1px; }
.drop .gray { color: #777; } .drop .mid { text-align: center; }
.name { display: flex; width: 80px; height: 20px; border: 1px solid #888; background: #fff; color: #800040; overflow: hidden; white-space: nowrap; line-height: 18px; }
.name b { width: 16px; background: #006660; color: #fff; font-weight: normal; text-align: center; margin-right: 1px; flex: none; }
.count { display: flex; align-items: center; width: 64px; color: #444; font-size: 12px; }
.count input { width: 31px; height: 20px; border: 1px solid #888; padding-left: 1px; color: #000; background: #fff; margin-right: 1px; }
.check { display: flex; align-items: center; gap: 3px; color: #333; margin-left: 1px; }
.check input { width: 12px; height: 12px; margin: 0; appearance: none; border: 1px solid #888; background: #fff; }
.info { display: flex; align-items: flex-start; height: 23px; flex: none; background: #d0d0d0; padding: 0 3px; gap: 2px; }
.quote { display: flex; width: 750px; height: 21px; border: 1px solid #777; background: #eee; }
.cell { display: flex; align-items: center; justify-content: space-between; border-right: 1px solid #bbb; padding: 0 2px; white-space: nowrap; }
.c1 { width: 172px; padding-left: 29px; } .c2 { width: 171px; padding-left: 9px; } .c3 { width: 82px; justify-content: flex-end; } .c4 { width: 141px; padding-right: 9px; } .c5 { flex: 1; border: 0; padding-right: 10px; }
.n1 { margin-right: 20px; }
.r { color: #e81e0c; } .u { color: #1040c0; }
.trade { width: 40px; height: 21px; border: 1px solid #888; font-size: 13px; }
.buy { background: #f5cfca; } .sell { background: #c4dcf4; }
.chart { flex: 1; min-height: 0; display: grid; grid-template-columns: 43px minmax(0, 1fr) 51px; grid-template-rows: minmax(0, 800fr) minmax(0, 161fr) 19px; background: #fff; border: solid #d8d8d8; border-width: 0 3px 0 3px; border-top: 1px solid #888; color: #444; }
.axis, .plot { position: relative; min-width: 0; min-height: 0; overflow: hidden; }
.axis.left { border-left: 1px solid #888; border-right: 1px solid #888; }
.axis.right { border-right: 1px solid #aaa; }
.sub { border-top: 1px solid #888; }
.plot svg { display: block; width: 100%; height: 100%; }
.lab { position: absolute; line-height: 14px; margin-top: -7px; }
.left .lab { right: 2px; }
.right .lab { left: 11px; }
.right .lab::before { content: ""; position: absolute; left: -7px; top: 7px; width: 5px; border-top: 1px solid #888; }
.sub .lab { font-size: 11px; }
.sub.left .lab { right: 6px; }
.sub.right .lab { left: 9px; }
.sub.left .lab::after { content: ""; position: absolute; right: -6px; top: 7px; width: 5px; border-top: 1px solid #888; }
.rail { position: absolute; left: 0; top: 0; bottom: 0; width: 4px; border-right: 1px solid #888; background: linear-gradient(#e81e0c 90.5%, #1060d0 90.5%); }
.lc { position: absolute; left: 4px; top: 1px; line-height: 12px; font-size: 11px; color: #e81e0c; white-space: nowrap; }
.lc i { font-style: normal; color: #1050c0; }
.now { position: absolute; margin-top: -7px; height: 13px; line-height: 13px; background: #e81e0c; color: #fff; padding: 0 2px; }
.pct { position: absolute; margin-top: -7px; font-size: 11px; color: #e81e0c; }
.left .now { left: 3px; width: 34px; } .left .pct { left: 8px; }
.right .now { left: 8px; width: 40px; } .right .pct { left: 10px; }
.cursor { position: absolute; margin-top: -15px; height: 30px; line-height: 13px; font-size: 11px; border: 1px solid #000; background: #ffd966; text-align: center; white-space: nowrap; }
.cursor i { font-style: normal; color: #f00; }
.left .cursor { left: 1px; width: 38px; } .right .cursor { left: 7px; width: 42px; }
.gridicon { position: absolute; left: 5px; top: 19px; width: 14px; height: 14px; border: 1px solid #000; background: linear-gradient(90deg, transparent 3px, #777 3px 4px, transparent 4px 7px, #777 7px 8px, transparent 8px), linear-gradient(#eee 3px, #777 3px 4px, #eee 4px 7px, #777 7px 8px, #eee 8px); }
.legend { position: absolute; left: 3px; top: 1px; display: flex; align-items: center; gap: 3px; font-size: 13px; }
.legend i { width: 5px; height: 6px; border: 1px solid #666; background: #ccc; }
.legend em { font-style: normal; border: 1px solid #bbb; background: #eee; padding: 0 2px; line-height: 13px; color: #333; }
.note { position: absolute; margin-top: -7px; line-height: 14px; white-space: nowrap; }
.note.end { right: 1px; }
.hi { color: #f00; } .lo { color: #00c; }
.corner { border: 1px solid #888; }
.corner.end { border-left-width: 0; font-size: 11px; line-height: 16px; padding-left: 9px; }
.timeline { position: relative; border: solid #888; border-width: 1px 0; line-height: 16px; overflow: hidden; }
.day { position: absolute; left: 2px; }
.tick { position: absolute; border-left: 1px solid #888; padding-left: 1px; height: 17px; }
.date { position: absolute; top: -1px; border: 1px solid #000; background: #ffd966; height: 19px; line-height: 16px; padding: 0 1px; width: 137px; white-space: nowrap; }
.x { position: absolute; right: 2px; top: 4px; width: 8px; height: 8px; border: 0; background: #333; color: #fff; font-size: 9px; line-height: 8px; }
.bottom { display: flex; align-items: center; height: 20px; flex: none; background: #e2e2e2; padding: 0 2px 2px 3px; }
.s { width: 17px; height: 17px; border: 1px solid #fff; border-right-color: #555; border-bottom-color: #555; background: #eee; display: flex; align-items: center; justify-content: center; flex: none; }
.track { flex: 1; height: 17px; background: #f4f4f4; }
.thumb { margin-left: 34.4%; width: 41%; height: 17px; background: #eee; border: 1px solid #fff; border-right: 2px solid #666; border-bottom: 2px solid #777; }
.slider { margin-left: 4px; flex: none; }
.tools { flex: none; }
</style>
